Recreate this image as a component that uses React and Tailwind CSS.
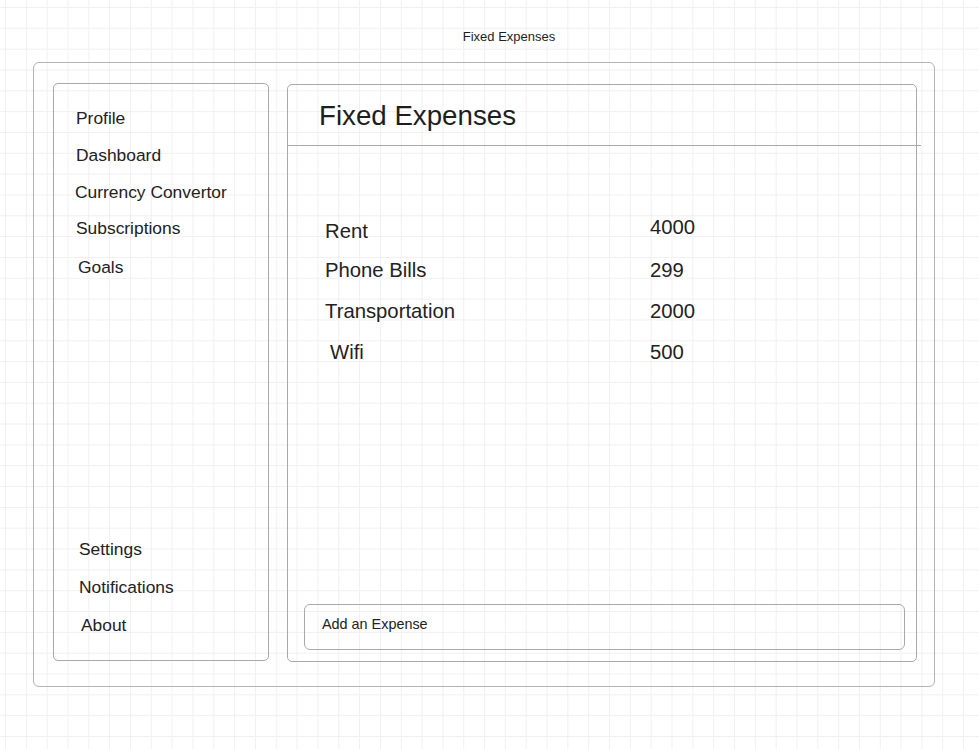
const topLinks = [
  { label: 'Profile', cls: 'h-[37px] pl-[22px]' },
  { label: 'Dashboard', cls: 'h-[37px] pl-[22px]' },
  { label: 'Currency Convertor', cls: 'h-[36px] pl-[21px]' },
  { label: 'Subscriptions', cls: 'h-[37px] pl-[22px]' },
  { label: 'Goals', cls: 'h-[39px] pl-[24px] pt-[2px]' },
];

const bottomLinks = [
  { label: 'Settings', cls: 'pl-[25px]' },
  { label: 'Notifications', cls: 'pl-[25px]' },
  { label: 'About', cls: 'pl-[27px]' },
];

const expenses = [
  { name: 'Rent', amount: 4000, nameCls: 'pl-[37px] pt-[4px]', amountCls: 'pb-[4px]' },
  { name: 'Phone Bills', amount: 299, nameCls: 'pl-[37px]', amountCls: '' },
  { name: 'Transportation', amount: 2000, nameCls: 'pl-[37px]', amountCls: '' },
  { name: 'Wifi', amount: 500, nameCls: 'pl-[42px]', amountCls: '' },
];

const Sidebar = () => (
  <aside className="w-[216px] h-[578px] border border-[#a9a9a9] rounded-[5px] flex flex-col justify-between pt-[16px] pb-[16px]">
    <ul>
      {topLinks.map((link) => (
        <li key={link.label} className={`flex items-center ${link.cls}`}>
          {link.label}
        </li>
      ))}
    </ul>
    <ul>
      {bottomLinks.map((link) => (
        <li key={link.label} className={`h-[38px] flex items-center ${link.cls}`}>
          {link.label}
        </li>
      ))}
    </ul>
  </aside>
);

const ExpensePanel = () => (
  <section className="mt-[1px] w-[630px] h-[578px] border border-[#a9a9a9] rounded-[5px] flex flex-col">
    {/* Header */}
    <div className="h-[61px] -mr-[5px] border-b border-[#a9a9a9] flex items-center pl-[31px] pt-[1px]">
      <h1 className="text-[27.7px] leading-none text-[#1e1e1e]">Fixed Expenses</h1>
    </div>

    {/* Expense rows */}
    <div className="mt-[63px] text-[20.3px] text-[#222]">
      {expenses.map((item) => (
        <div key={item.name} className="h-[41px] flex items-center">
          <span className={`w-[362px] ${item.nameCls}`}>{item.name}</span>
          <span className={item.amountCls}>{item.amount}</span>
        </div>
      ))}
    </div>

    {/* Add button */}
    <div className="mt-auto ml-[16px] mr-[11px] mb-[11px] h-[46px] border border-[#a9a9a9] rounded-[6px] pl-[17px] pt-[5px]">
      <span className="text-[14.4px] leading-[18px] text-[#222]">Add an Expense</span>
    </div>
  </section>
);

export default function App() {
  return (
    <div className="w-[979px] h-[749px] overflow-hidden bg-white bg-[linear-gradient(to_right,#f0f0f0_1px,transparent_1px),linear-gradient(to_bottom,#f0f0f0_1px,transparent_1px)] bg-[size:20.83px_20.83px] bg-[position:5px_7px] font-['Liberation_Sans',Arial,sans-serif] text-[#222]">
      <p className="pt-[29px] leading-[16px] text-[13px] text-center pl-[39px] mb-[17px] text-[#1e1e1e]">
        Fixed Expenses
      </p>

      <div className="ml-[33px] w-[902px] h-[625px] border border-[#b3b3b3] rounded-[6px] flex items-start gap-[18px] pl-[19px] pt-[20px] text-[17.4px]">
        <Sidebar />
        <ExpensePanel />
      </div>
    </div>
  );
}
